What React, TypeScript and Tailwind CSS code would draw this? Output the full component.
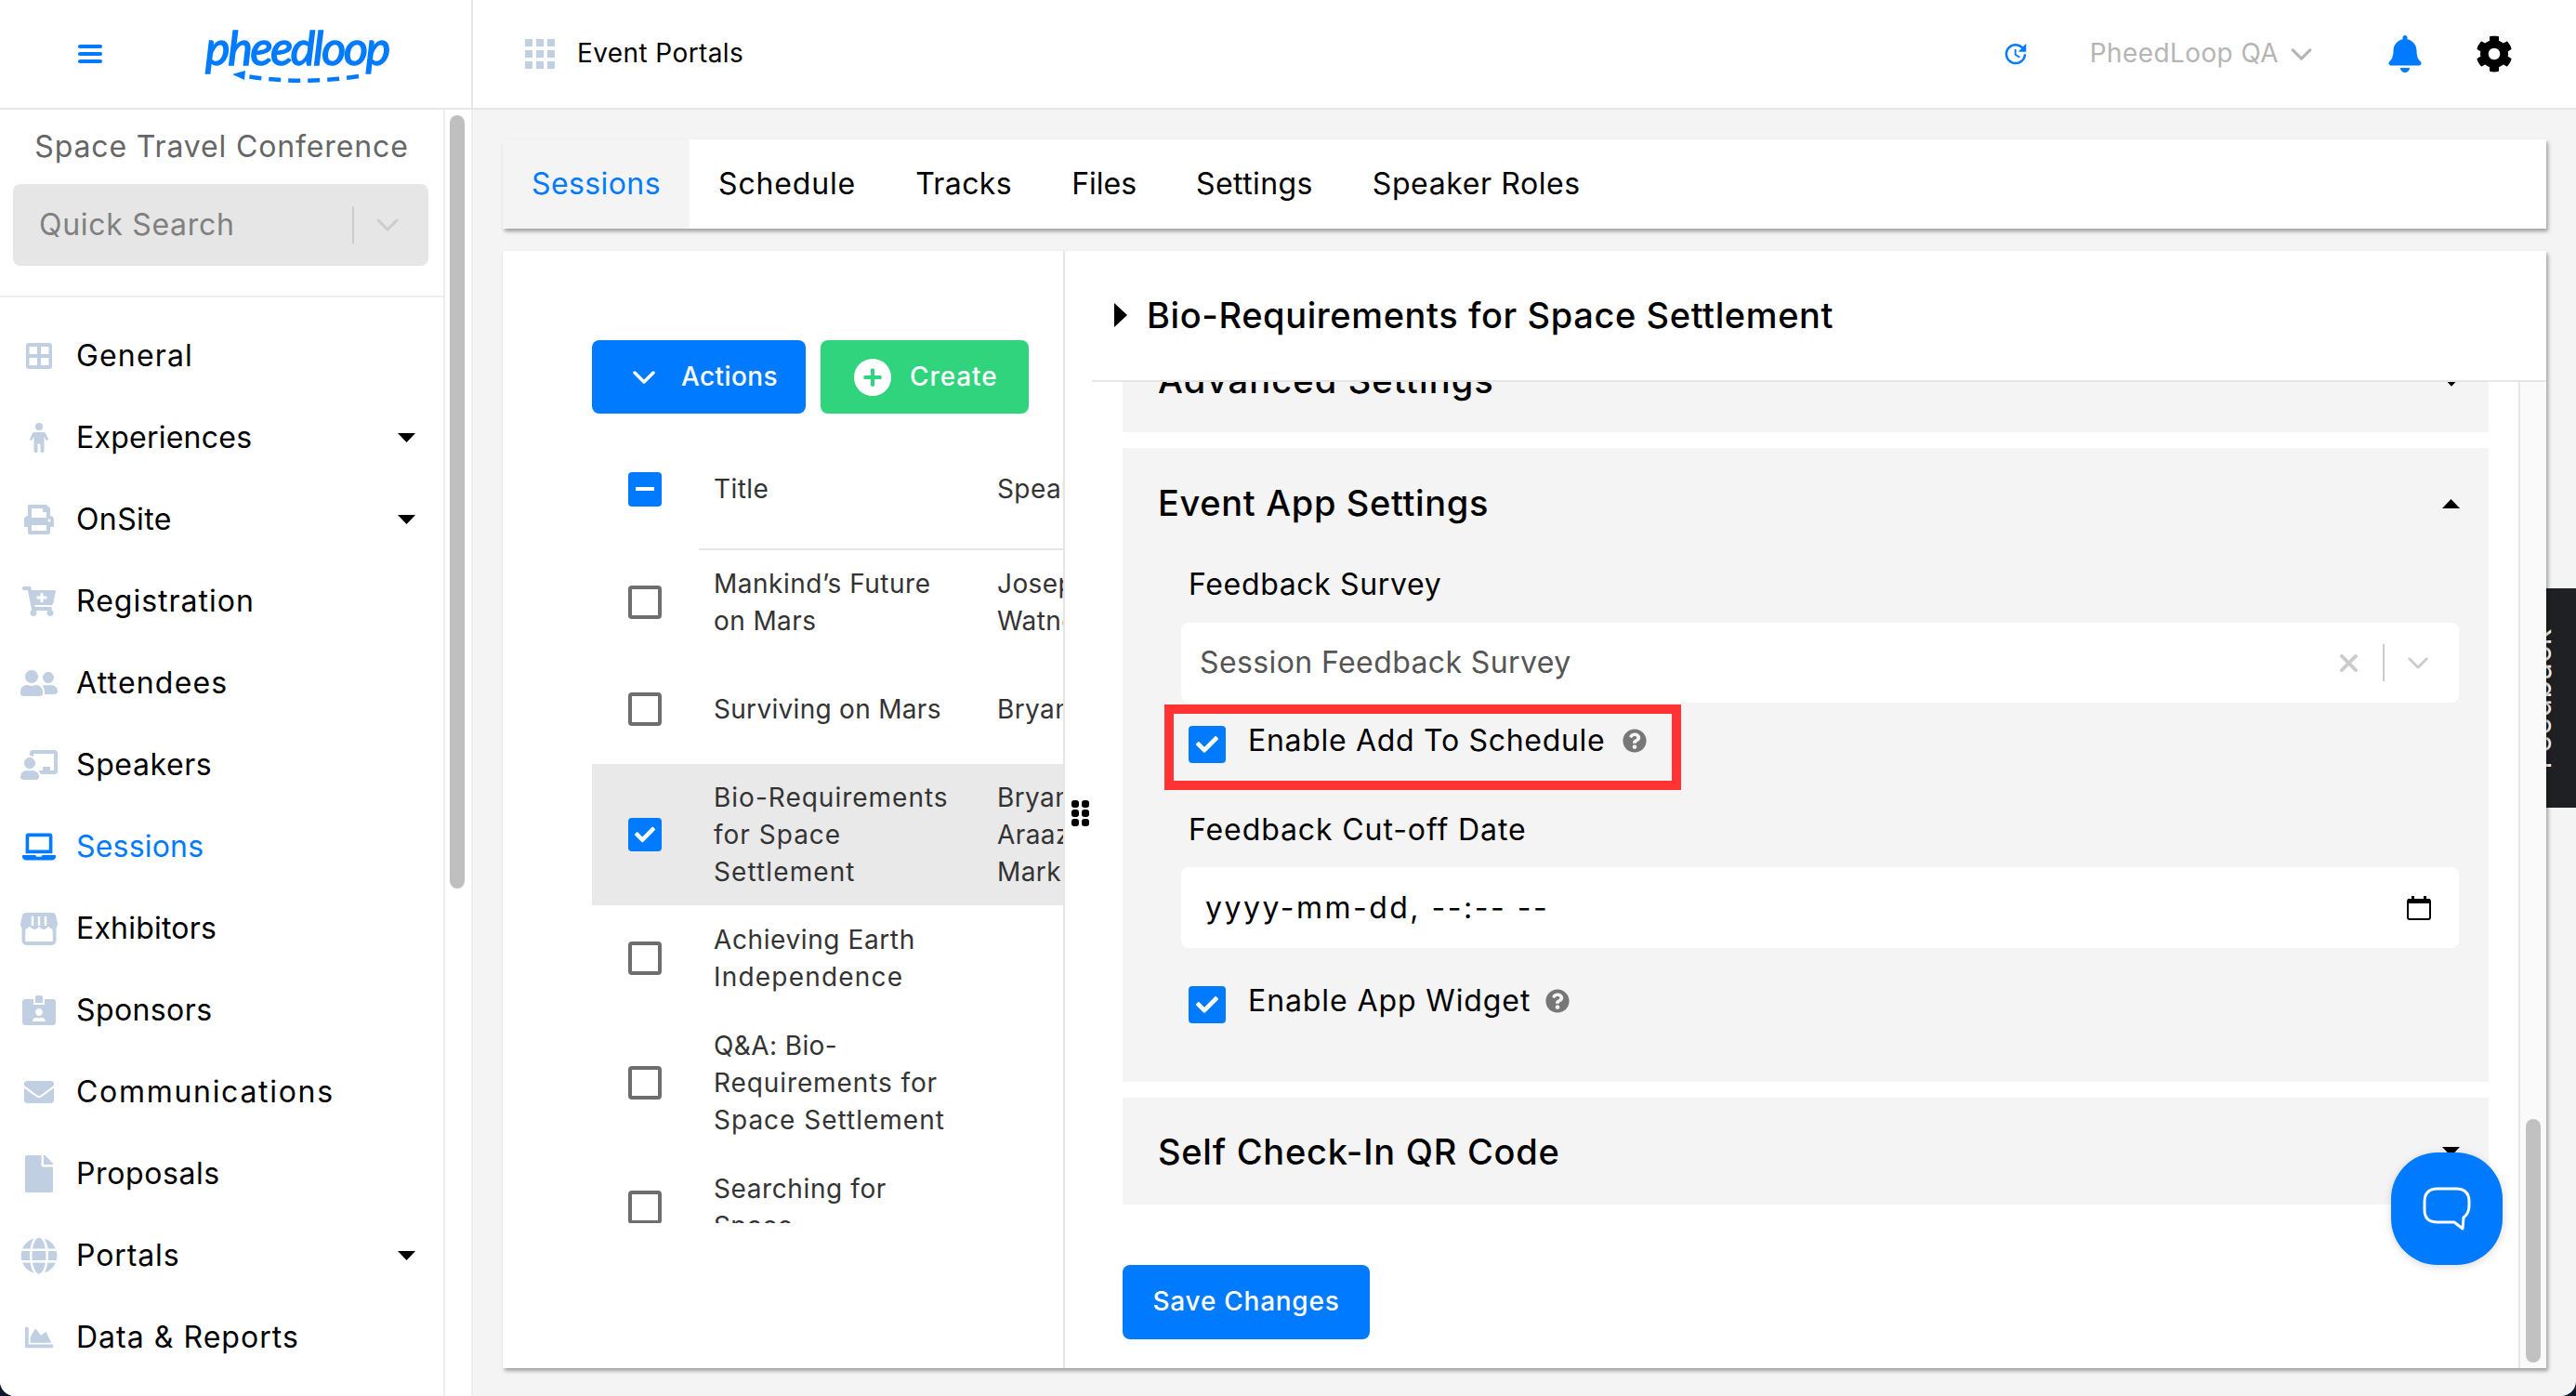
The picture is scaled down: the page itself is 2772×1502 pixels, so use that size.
import React from "react";
import {
  FaBell, FaCog, FaPrint, FaCartPlus, FaUserFriends, FaChalkboardTeacher, FaLaptop,
  FaIdCardAlt, FaEnvelope, FaFile, FaGlobe, FaChartArea, FaCheck, FaQuestionCircle, FaPlus,
} from "react-icons/fa";
import { MdUpdate } from "react-icons/md";

const Chevron = ({ className, w = 3 }: { className?: string; w?: number }) => (
  <svg viewBox="0 0 24 14" className={className} fill="none" stroke="currentColor" strokeWidth={w} strokeLinecap="round" strokeLinejoin="round">
    <path d="M2 2 L12 12 L22 2" />
  </svg>
);

const Caret = ({ className, up }: { className?: string; up?: boolean }) => (
  <svg viewBox="0 0 19 10" className={className} fill="currentColor">
    <polygon points={up ? "0,10 19,10 9.5,0" : "0,0 19,0 9.5,10"} />
  </svg>
);

const GeneralIcon = () => (
  <svg viewBox="0 0 28 28" className="h-[28px] w-[28px]" fill="#c1cfe2">
    <path fillRule="evenodd" d="M3 0h22a3 3 0 0 1 3 3v22a3 3 0 0 1-3 3H3a3 3 0 0 1-3-3V3a3 3 0 0 1 3-3zM3.500 4v8h8.500V4zM16 4v8h8.500V4zM3.500 16v8h8.500v-8zM16 16v8h8.500v-8z" />
  </svg>
);

const PersonIcon = () => (
  <svg viewBox="0 0 20 32" className="h-[32px] w-[20px]" fill="#c1cfe2">
    <circle cx="10" cy="4" r="4" />
    <path d="M5.500 10h9c1.500 0 2.500.8 3.200 2.200l2 5c.6 1.500-1.400 2.500-2.200 1.100L15.500 15v6.500V30a2 2 0 0 1-4 0v-7.500h-3V30a2 2 0 0 1-4 0V15l-2 3.300c-.8 1.400-2.800.4-2.200-1.100l2-5C3 10.800 4 10 5.500 10z" />
  </svg>
);

const StoreIcon = () => (
  <svg viewBox="0 0 40 36" className="h-[36px] w-[40px]">
    <rect x="3.500" y="14" width="33" height="20" rx="3" fill="none" stroke="#c1cfe2" strokeWidth="4" />
    <path fill="#c1cfe2" d="M6 1h28a4 4 0 0 1 4 3l2 9a5 5 0 0 1-10 1 5 5 0 0 1-10 0 5 5 0 0 1-10 0 5 5 0 0 1-10-1l2-9a4 4 0 0 1 4-3z" />
    <path stroke="#fff" strokeWidth="2.500" d="M13 5v10M20 5v10M27 5v10" />
    <rect x="5.500" y="22" width="29" height="10" fill="#fff" />
  </svg>
);

const nav: { label: string; t: string; icon: React.ReactNode; caret?: boolean; active?: boolean }[] = [
  { label: "General", t: "tracking-[1.15px]", icon: <GeneralIcon /> },
  { label: "Experiences", t: "tracking-[0.24px]", icon: <PersonIcon />, caret: true },
  { label: "OnSite", t: "tracking-[0.4px]", icon: <FaPrint className="h-[32px] w-[32px]" />, caret: true },
  { label: "Registration", t: "tracking-[1px]", icon: <FaCartPlus className="h-[32px] w-[36px]" /> },
  { label: "Attendees", t: "tracking-[1.2px]", icon: <FaUserFriends className="h-[32px] w-[44px]" /> },
  { label: "Speakers", t: "tracking-[0.6px]", icon: <FaChalkboardTeacher className="h-[32px] w-[40px]" /> },
  { label: "Sessions", t: "tracking-[0.2px]", icon: <FaLaptop className="h-[32px] w-[36px]" />, active: true },
  { label: "Exhibitors", t: "tracking-[0.2px]", icon: <StoreIcon /> },
  { label: "Sponsors", t: "tracking-[0.4px]", icon: <FaIdCardAlt className="h-[32px] w-[36px]" /> },
  { label: "Communications", t: "tracking-[1.7px]", icon: <FaEnvelope className="h-[32px] w-[40px]" /> },
  { label: "Proposals", t: "tracking-[0.6px]", icon: <FaFile className="h-[40px] w-[32px]" /> },
  { label: "Portals", t: "tracking-[0.9px]", icon: <FaGlobe className="h-[40px] w-[40px]" />, caret: true },
  { label: "Data & Reports", t: "tracking-[1.03px]", icon: <FaChartArea className="h-[30px] w-[32px]" /> },
];

const rows: { h: string; lines: [string, string][]; speakers: string[]; checked?: boolean }[] = [
  { h: "h-[112px]", lines: [["Mankind’s Future", "tracking-[0.5px]"], ["on Mars", "tracking-[0.4px]"]], speakers: ["Joseph", "Watney"] },
  { h: "h-[118px]", lines: [["Surviving on Mars", "tracking-[0.3px]"]], speakers: ["Bryan"] },
  { h: "h-[152px]", lines: [["Bio-Requirements", "tracking-[1px]"], ["for Space", "tracking-[1px]"], ["Settlement", "tracking-[1.1px]"]], speakers: ["Bryan", "Araaz", "Mark"], checked: true },
  { h: "h-[114px]", lines: [["Achieving Earth", "tracking-[0.6px]"], ["Independence", "tracking-[1.2px]"]], speakers: [] },
  { h: "h-[154px]", lines: [["Q&A: Bio-", "tracking-[0.4px]"], ["Requirements for", "tracking-[0.9px]"], ["Space Settlement", "tracking-[1px]"]], speakers: [] },
  { h: "h-[114px]", lines: [["Searching for", "tracking-[0.6px]"], ["Space", "tracking-[0.4px]"]], speakers: [] },
];

const TableCheck = ({ checked }: { checked?: boolean }) =>
  checked ? (
    <div className="flex h-[36px] w-[36px] shrink-0 items-center justify-center rounded-[4px] bg-[#007bff]">
      <FaCheck className="h-[22px] w-[22px] text-white" />
    </div>
  ) : (
    <div className="h-[36px] w-[36px] shrink-0 rounded-[4px] border-[4px] border-[#6e6e6e] bg-white" />
  );

const BigCheck = () => (
  <div className="flex h-[40px] w-[40px] shrink-0 items-center justify-center rounded-[4px] bg-[#007bff]">
    <FaCheck className="h-[24px] w-[24px] text-white" />
  </div>
);

const Help = () => <FaQuestionCircle className="h-[26px] w-[26px] text-[#777777]" />;

export default function App() {
  return (
    <div className="h-[1502px] w-[2772px] overflow-hidden bg-[#0f172a] font-['Inter',sans-serif] tracking-[0.4px] text-black">
      <div className="relative flex h-full flex-col overflow-hidden rounded-b-[16px] bg-[#f4f4f4]">
        {/* Top bar */}
        <header className="flex h-[118px] shrink-0 border-b-2 border-[#e6e6e6] bg-white">
          <div className="relative flex w-[509px] shrink-0 items-center border-r-2 border-[#e6e6e6]">
            <div className="ml-[84px] flex h-[20px] w-[26px] flex-col justify-between">
              <div className="h-[4px] rounded-sm bg-[#007bff]" />
              <div className="h-[4px] rounded-sm bg-[#007bff]" />
              <div className="h-[4px] rounded-sm bg-[#007bff]" />
            </div>
            <span className="ml-[111px] -mt-[14px] whitespace-nowrap font-['Lato',sans-serif] text-[50px] leading-[60px] font-normal tracking-[-2.2px] text-[#007bff] italic [-webkit-text-stroke:1.500px_#007bff]">
              pheedloop
            </span>
            <svg viewBox="0 0 150 16" className="absolute top-[76px] left-[246px] h-[16px] w-[150px]" fill="none">
              <path d="M140 6 Q75 16 14 5" stroke="#007bff" strokeWidth="4.500" strokeDasharray="13 8" />
              <polygon points="4,4 18,0 17,10" fill="#007bff" />
            </svg>
          </div>
          <div className="flex flex-1 items-center pl-[56px]">
            <div className="grid h-[32px] w-[32px] grid-cols-3 gap-[4px]">
              {Array.from({ length: 9 }).map((_, i) => (
                <div key={i} className="bg-[#c1cfe2]" />
              ))}
            </div>
            <span className="-mt-[3px] ml-[24px] text-[28px] leading-[40px]">Event Portals</span>
            <MdUpdate className="ml-auto h-[30px] w-[30px] text-[#007bff]" />
            <span className="-mt-[3px] ml-[65px] text-[28px] leading-[40px] text-[#b5b5b5]">PheedLoop QA</span>
            <Chevron className="ml-[13px] h-[13px] w-[23px] text-[#b5b5b5]" w={3.500} />
            <FaBell className="ml-[82px] h-[40px] w-[36px] text-[#007bff]" />
            <FaCog className="mr-[68px] ml-[58px] h-[40px] w-[40px] text-black" />
          </div>
        </header>

        <div className="flex min-h-0 flex-1">
          {/* Sidebar */}
          <aside className="flex w-[509px] shrink-0 border-r-2 border-[#eeeeee] bg-white">
            <div className="w-[479px] shrink-0 border-r-2 border-[#eeeeee]">
              <div className="border-b-2 border-[#eeeeee] pt-[16px] pb-[32px]">
                <div className="text-center text-[32px] leading-[48px] tracking-[0.86px] text-[#666666]">Space Travel Conference</div>
                <div className="mt-[16px] mr-[16px] ml-[14px] flex h-[88px] items-center rounded-[8px] bg-[#e6e6e6] pl-[28px]">
                  <span className="text-[32px] tracking-[0.7px] text-[#808080]">Quick Search</span>
                  <div className="ml-auto h-[40px] w-[2px] bg-[#cccccc]" />
                  <Chevron className="mr-[32px] ml-[24px] h-[14px] w-[24px] text-[#cccccc]" />
                </div>
              </div>
              <nav className="pt-[19px]">
                {nav.map((n) => (
                  <div key={n.label} className="flex h-[88px] items-center">
                    <div className={`ml-[12px] flex w-[60px] shrink-0 items-center justify-center ${n.active ? "text-[#007bff]" : "text-[#c1cfe2]"}`}>
                      {n.icon}
                    </div>
                    <span className={`ml-[10px] text-[32px] ${n.t} ${n.active ? "text-[#007bff]" : "text-black"}`}>{n.label}</span>
                    {n.caret && <Caret className="mr-[30px] ml-auto h-[10px] w-[19px] text-black" />}
                  </div>
                ))}
              </nav>
            </div>
            <div className="flex-1 pl-[5px]">
              <div className="mt-[6px] h-[832px] w-[16px] rounded-full bg-[#bfbfbf]" />
            </div>
          </aside>

          {/* Main */}
          <main className="flex min-w-0 flex-1 flex-col px-[32px] pt-[32px]">
            <div className="relative z-10 flex h-[96px] shrink-0 items-stretch bg-white text-[32px] shadow-[2px_3px_4px_rgba(0,0,0,0.35)]">
              <div className="flex w-[201px] items-center justify-center bg-[#f4f4f4] text-[#007bff]">Sessions</div>
              <div className="flex items-center pl-[31px]">
                <span className="tracking-[0.85px]">Schedule</span>
                <span className="ml-[64px]">Tracks</span>
                <span className="ml-[64px] tracking-[0px]">Files</span>
                <span className="ml-[64px]">Settings</span>
                <span className="ml-[64px] tracking-[0.6px]">Speaker Roles</span>
              </div>
            </div>

            <div className="relative z-10 mt-[24px] flex h-[1202px] shrink-0 bg-white shadow-[2px_3px_4px_rgba(0,0,0,0.35)]">
              {/* Left list */}
              <section className="w-[605px] shrink-0 border-r-2 border-[#e6e6e6] pt-[96px] pl-[96px]">
                <div className="flex h-[79px] gap-[16px]">
                  <button className="flex w-[230px] items-center rounded-[8px] bg-[#007bff] pl-[44px] text-[28px] font-medium text-white">
                    <Chevron className="h-[14px] w-[24px]" w={3.500} />
                    <span className="ml-[28px] -mt-[1px]">Actions</span>
                  </button>
                  <button className="flex w-[224px] items-center rounded-[8px] bg-[#2fd47d] pl-[36px] text-[28px] font-medium text-white">
                    <span className="flex h-[40px] w-[40px] items-center justify-center rounded-full bg-white">
                      <FaPlus className="h-[22px] w-[22px] text-[#2fd47d]" />
                    </span>
                    <span className="ml-[20px] -mt-[1px] tracking-[0.9px]">Create</span>
                  </button>
                </div>
                <div className="h-[871px] overflow-hidden text-[28px] leading-[40px] text-[#333333]">
                  <div className="mt-[41px] flex h-[80px] items-center pl-[39px]">
                    <div className="flex h-[37px] w-[36px] shrink-0 items-center justify-center rounded-[4px] bg-[#007bff]">
                      <div className="h-[4px] w-[20px] bg-white" />
                    </div>
                    <span className="w-[361px] shrink-0 pl-[56px]">Title</span>
                    <span className="whitespace-nowrap">Speakers</span>
                  </div>
                  <div className="mt-[24px] ml-[115px] h-[2px] bg-[#e6e6e6]" />
                  {rows.map((r) => (
                    <div key={r.lines[0][0]} className={`flex shrink-0 items-center overflow-hidden pl-[39px] ${r.h} ${r.checked ? "bg-[#e9e9e9]" : ""}`}>
                      <TableCheck checked={r.checked} />
                      <div className="w-[361px] shrink-0 pl-[56px] whitespace-nowrap">
                        {r.lines.map(([l, t]) => (
                          <div key={l} className={t}>{l}</div>
                        ))}
                      </div>
                      <div className="whitespace-nowrap">
                        {r.speakers.map((s) => (
                          <div key={s}>{s}</div>
                        ))}
                      </div>
                    </div>
                  ))}
                </div>
              </section>

              {/* Drag handle */}
              <div className="absolute top-[591px] left-[612px] grid grid-cols-2 gap-x-[3px] gap-y-[2px]">
                {Array.from({ length: 6 }).map((_, i) => (
                  <div key={i} className="h-[8px] w-[8px] rounded-[3px] bg-black" />
                ))}
              </div>

              {/* Right panel */}
              <section className="flex min-w-0 flex-1 flex-col">
                <div className="relative z-10 ml-[29px] flex h-[141px] shrink-0 items-center border-b-2 border-[#e6e6e6] bg-white pb-[2px] pl-[24px]">
                  <svg viewBox="0 0 14 26" className="h-[26px] w-[14px]" fill="currentColor">
                    <polygon points="0,0 14,13 0,26" />
                  </svg>
                  <span className="ml-[21px] text-[38px] leading-[56px] font-medium tracking-[0.6px]">Bio-Requirements for Space Settlement</span>
                </div>
                <div className="flex min-h-0 flex-1">
                  <div className="min-w-0 flex-1 overflow-hidden pr-[32px] pl-[62px]">
                    <div className="flex h-[54px] justify-between overflow-hidden bg-[#f4f4f4] pr-[35px] pl-[38px]">
                      <span className="-mt-[30px] text-[38px] leading-[56px] font-medium tracking-[1.15px]">Advanced Settings</span>
                      <Caret className="-mt-[1px] h-[6px] w-[10px]" />
                    </div>

                    <div className="mt-[17px] h-[682px] bg-[#f4f4f4] pt-[32px]">
                      <div className="flex h-[56px] items-center justify-between pr-[31px] pl-[38px]">
                        <span className="-mt-[2px] text-[38px] leading-[56px] font-medium tracking-[0.65px]">Event App Settings</span>
                        <Caret up className="h-[10px] w-[19px]" />
                      </div>
                      <div className="mt-[35px] pl-[71px] text-[32px] leading-[48px] tracking-[0.65px]">Feedback Survey</div>
                      <div className="mt-[17px] mr-[32px] ml-[63px] flex h-[86px] items-center rounded-[8px] bg-white pl-[20px] text-[32px] text-[#555555]">
                        <span>Session Feedback Survey</span>
                        <svg viewBox="0 0 20 20" className="ml-auto h-[19px] w-[19px]" stroke="#cccccc" strokeWidth="4" strokeLinecap="round">
                          <path d="M2 2 18 18M18 2 2 18" />
                        </svg>
                        <div className="ml-[27px] h-[40px] w-[2px] bg-[#cccccc]" />
                        <Chevron className="mr-[32px] ml-[24px] h-[13px] w-[24px] text-[#cccccc]" />
                      </div>

                      <div className="relative mt-[25px] ml-[71px] flex h-[40px] items-start text-[32px] leading-[32px]">
                        <BigCheck />
                        <span className="ml-[24px] tracking-[0.7px]">Enable Add To Schedule</span>
                        <span className="mt-[3px] ml-[19px]"><Help /></span>
                        <div className="absolute -top-[23px] -left-[26px] h-[92px] w-[556px] border-[10px] border-[#ff3333]" />
                      </div>

                      <div className="mt-[48px] pl-[71px] text-[32px] leading-[48px] tracking-[0.9px]">Feedback Cut-off Date</div>
                      <div className="mt-[16px] mr-[32px] ml-[63px] flex h-[87px] items-center rounded-[8px] bg-white pr-[30px] pl-[26px] text-[32px]">
                        <span className="tracking-[2.5px] whitespace-pre">yyyy-mm-dd, --:-- --</span>
                        <svg viewBox="0 0 26 26" className="ml-auto h-[26px] w-[26px]">
                          <rect x="1" y="4" width="24" height="21" rx="2" fill="none" stroke="#000" strokeWidth="2" />
                          <rect x="1" y="3" width="24" height="5" fill="#000" />
                          <rect x="5" y="0" width="3" height="4" fill="#000" />
                          <rect x="18" y="0" width="3" height="4" fill="#000" />
                        </svg>
                      </div>

                      <div className="mt-[41px] ml-[71px] flex h-[40px] items-start text-[32px] leading-[32px]">
                        <BigCheck />
                        <span className="ml-[24px] tracking-[0.9px]">Enable App Widget</span>
                        <span className="mt-[3px] ml-[16px]"><Help /></span>
                      </div>
                    </div>

                    <div className="mt-[17px] flex h-[115px] items-center justify-between bg-[#f4f4f4] pr-[31px] pl-[38px]">
                      <span className="text-[38px] leading-[56px] font-medium tracking-[0.75px]">Self Check-In QR Code</span>
                      <Caret className="h-[10px] w-[19px]" />
                    </div>

                    <button className="mt-[65px] h-[80px] w-[266px] rounded-[8px] bg-[#007bff] pb-[2px] text-[28px] font-medium tracking-[0.74px] text-white">
                      Save Changes
                    </button>
                  </div>
                  <div className="w-[30px] shrink-0 border-l-2 border-[#e6e6e6] bg-[#fafafa] pl-[6px]">
                    <div className="mt-[793px] h-[262px] w-[16px] rounded-full bg-[#c1c1c1]" />
                  </div>
                </div>
              </section>
            </div>
          </main>
        </div>

        {/* Feedback side tab */}
        <div className="absolute top-[633px] left-[2740px] h-[236px] w-[32px] bg-[#1f2023]">
          <span className="absolute top-[119px] -left-[6px] -translate-x-1/2 -translate-y-1/2 -rotate-90 text-[32px] leading-[36px] whitespace-nowrap text-white">
            Feedback
          </span>
        </div>

        {/* Chat bubble */}
        <div className="absolute top-[1240px] left-[2573px] z-20 flex h-[121px] w-[120px] items-center justify-center rounded-[50px] bg-[#007bff] shadow-[0_2px_10px_rgba(0,0,0,0.15)]">
          <svg viewBox="0 0 52 50" className="h-[50px] w-[52px]" fill="none" stroke="#fff" strokeWidth="3" strokeLinejoin="round">
            <path d="M16 3h20c9 0 14 4 14 14v4c0 6-2 10-6 13l-1 12-9-7H16C7 39 2 35 2 26v-9C2 7 7 3 16 3z" />
          </svg>
        </div>
      </div>
    </div>
  );
}
